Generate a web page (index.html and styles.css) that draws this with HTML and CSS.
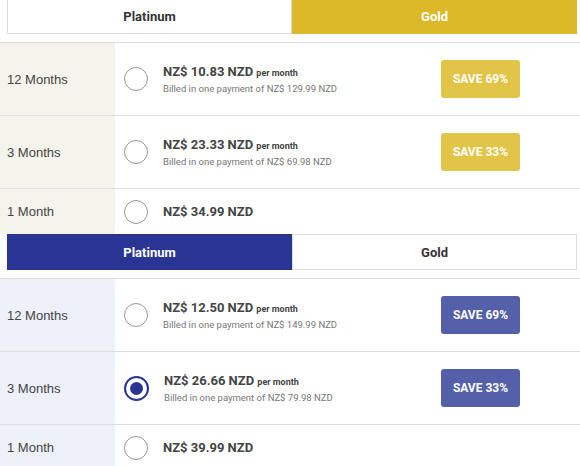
FILE: index.html
```html
<!DOCTYPE html>
<html lang="en">
<head>
    <meta charset="UTF-8">
    <meta name="viewport" content="width=device-width, initial-scale=1.0">
    <title>Plans</title>
    <link rel="stylesheet" href="styles.css">
</head>
<body>
    <div class="plans gold-theme">
        <div class="tabs">
            <div class="tab">Platinum</div>
            <div class="tab active">Gold</div>
        </div>
        <div class="row">
            <div class="term">12 Months</div>
            <div class="radio"></div>
            <div class="price">
                <div class="amount">NZ$ 10.83 NZD <small>per month</small></div>
                <div class="billed">Billed in one payment of NZ$ 129.99 NZD</div>
            </div>
            <div class="save">SAVE 69%</div>
        </div>
        <div class="row">
            <div class="term">3 Months</div>
            <div class="radio"></div>
            <div class="price">
                <div class="amount">NZ$ 23.33 NZD <small>per month</small></div>
                <div class="billed">Billed in one payment of NZ$ 69.98 NZD</div>
            </div>
            <div class="save">SAVE 33%</div>
        </div>
        <div class="row last">
            <div class="term">1 Month</div>
            <div class="radio"></div>
            <div class="price">
                <div class="amount">NZ$ 34.99 NZD</div>
            </div>
        </div>
    </div>

    <div class="plans platinum-theme">
        <div class="tabs">
            <div class="tab active">Platinum</div>
            <div class="tab">Gold</div>
        </div>
        <div class="row">
            <div class="term">12 Months</div>
            <div class="radio"></div>
            <div class="price">
                <div class="amount">NZ$ 12.50 NZD <small>per month</small></div>
                <div class="billed">Billed in one payment of NZ$ 149.99 NZD</div>
            </div>
            <div class="save">SAVE 69%</div>
        </div>
        <div class="row">
            <div class="term">3 Months</div>
            <div class="radio checked"></div>
            <div class="price">
                <div class="amount">NZ$ 26.66 NZD <small>per month</small></div>
                <div class="billed">Billed in one payment of NZ$ 79.98 NZD</div>
            </div>
            <div class="save">SAVE 33%</div>
        </div>
        <div class="row last">
            <div class="term">1 Month</div>
            <div class="radio"></div>
            <div class="price">
                <div class="amount">NZ$ 39.99 NZD</div>
            </div>
        </div>
    </div>
</body>
</html>
```
FILE: styles.css
```css
body {
    margin: 0;
    margin-top: -2px;
    font-family: Roboto, "Liberation Sans", sans-serif;
    background: white;
    overflow: hidden;
}
.tabs {
    display: flex;
    height: 36px;
    margin: 0 3px 8px 7px;
}
.tab {
    flex: 1;
    display: flex;
    align-items: center;
    justify-content: center;
    font-size: 13px;
    font-weight: bold;
    color: #333;
    border: 1px solid #dddddd;
    background: white;
}
.gold-theme .tab.active {
    background-color: #dbb929;
    border-color: #dbb929;
    color: white;
}
.platinum-theme .tab.active {
    background-color: #283593;
    border-color: #283593;
    color: white;
}
.row {
    display: flex;
    align-items: center;
    height: 72px;
    border-top: 1px solid #dddddd;
}
.row.last {
    height: 45px;
}
.term {
    width: 115px;
    align-self: stretch;
    display: flex;
    align-items: center;
    padding-left: 7px;
    box-sizing: border-box;
    font-family: "Liberation Sans", Arial, sans-serif;
    font-size: 13px;
    color: #444;
}
.gold-theme .term {
    background-color: #f4f4ec;
}
.platinum-theme .term {
    background-color: #eef1fa;
}
.radio {
    width: 22px;
    height: 22px;
    border: 1.5px solid #999;
    border-radius: 50%;
    margin: 0 15px 0 9px;
    display: flex;
    align-items: center;
    justify-content: center;
}
.radio.checked {
    border: 2px solid #283593;
    width: 21px;
    height: 21px;
}
.radio.checked::after {
    content: "";
    width: 13px;
    height: 13px;
    border-radius: 50%;
    background-color: #283593;
}
.price {
    flex: 1;
}
.amount {
    font-size: 13px;
    font-weight: bold;
    color: #444;
}
.amount small {
    font-size: 9px;
}
.billed {
    font-size: 9.5px;
    color: #777;
    margin-top: 4px;
}
.save {
    width: 79px;
    height: 38px;
    margin-right: 60px;
    border-radius: 3px;
    display: flex;
    align-items: center;
    justify-content: center;
    font-size: 12px;
    font-weight: bold;
    color: white;
}
.gold-theme .save {
    background-color: #e2c446;
}
.platinum-theme .save {
    background-color: #5560aa;
}
```
